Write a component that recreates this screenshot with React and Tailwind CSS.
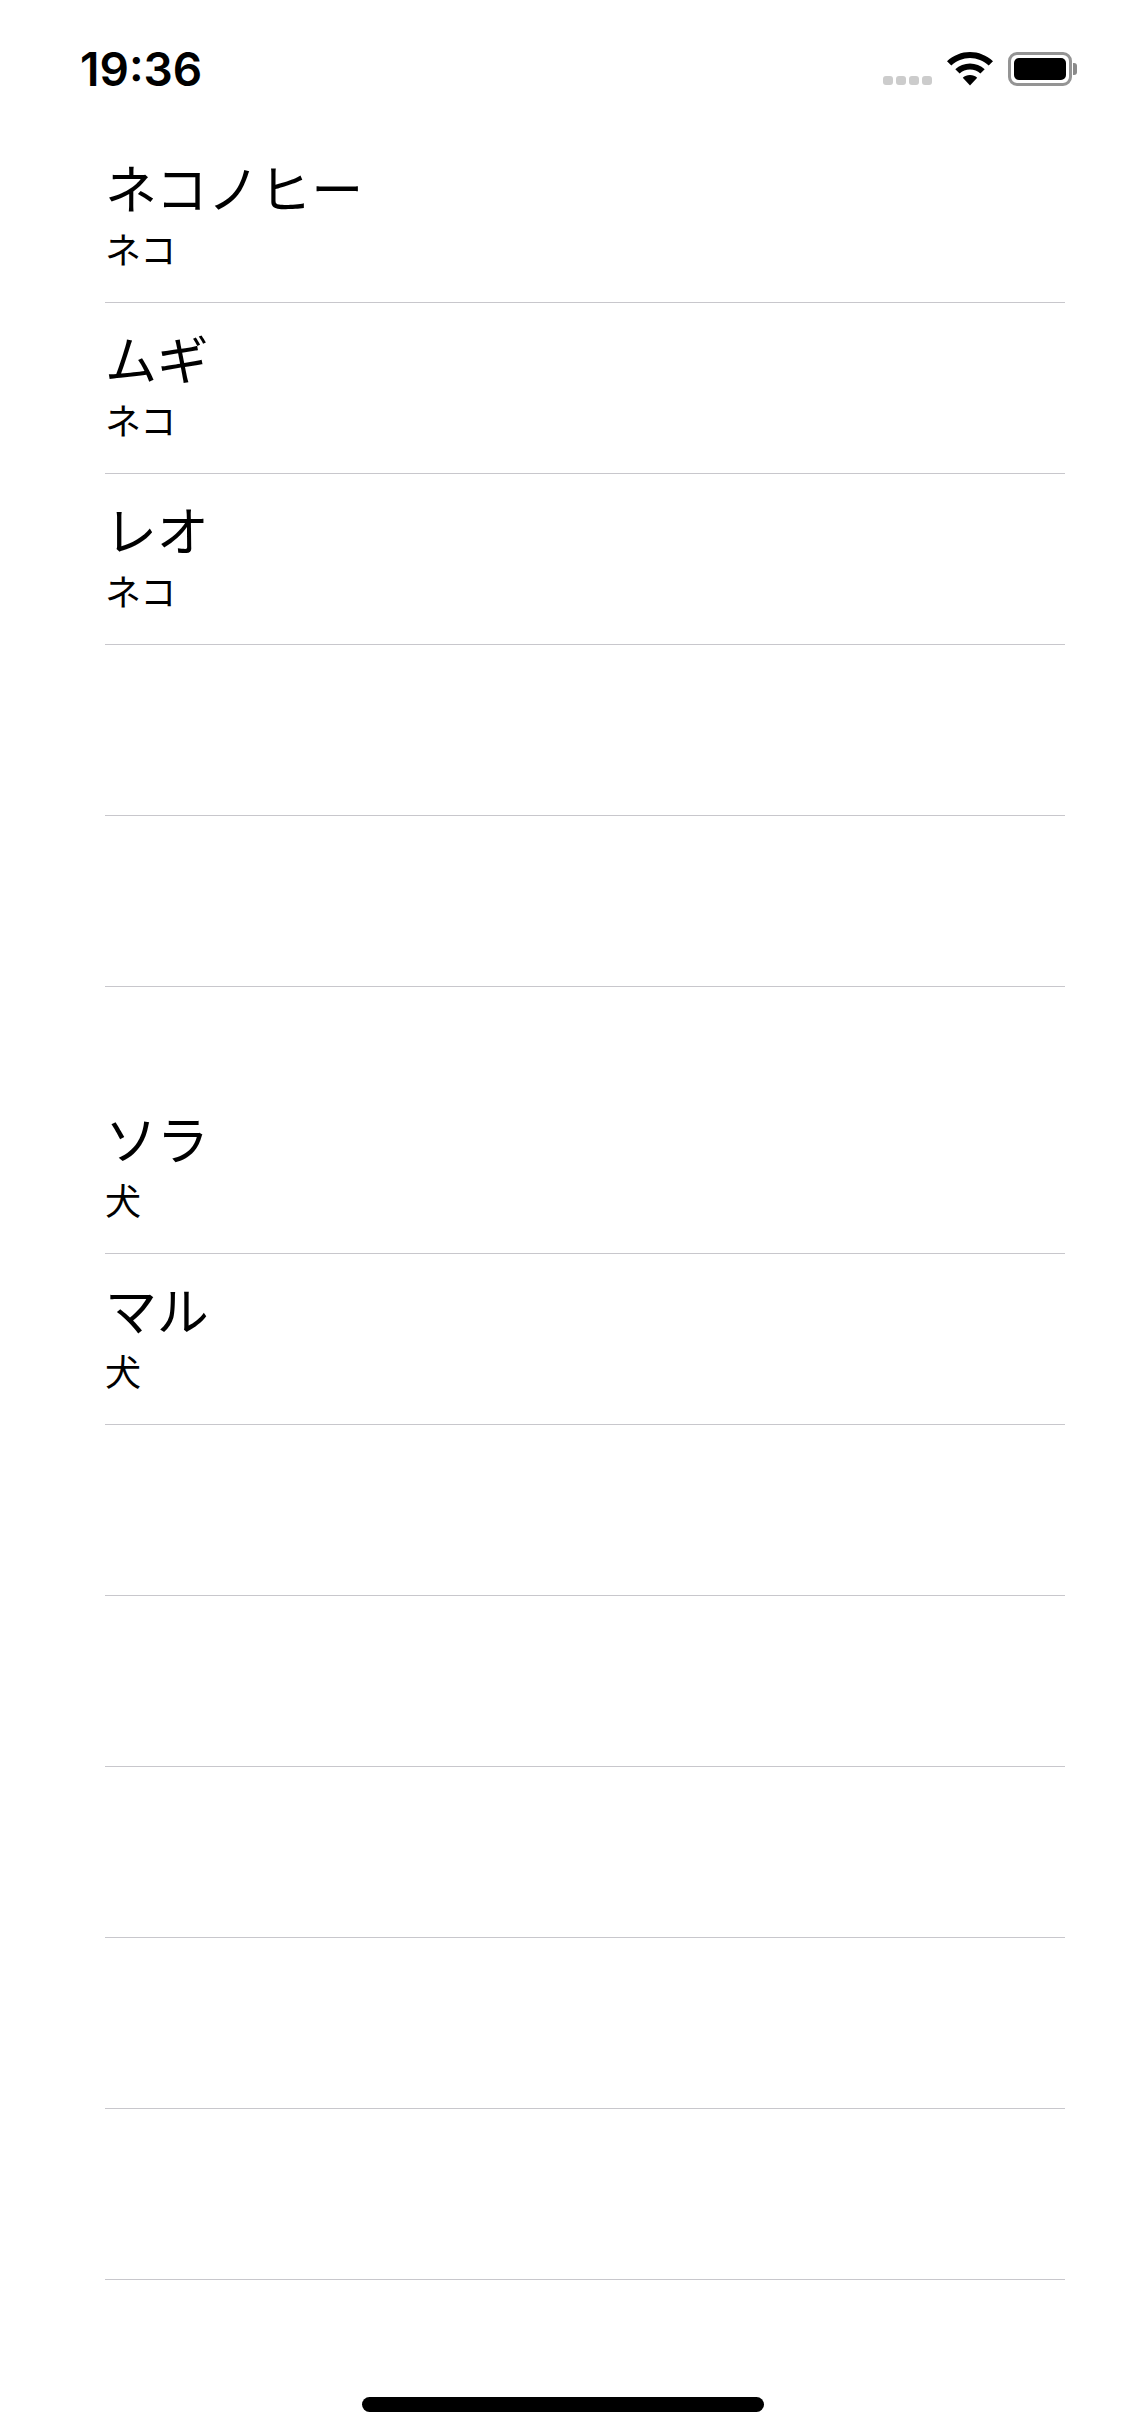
const jp = { fontFamily: '"Noto Sans CJK JP", sans-serif' };

function Row({ title, sub }) {
  return (
    <div className="h-[171px] border-b border-[#c8c7cc] box-border flex flex-col pt-[20px]" style={jp}>
      {title && (
        <>
          <div className="text-[52px] leading-[70px] font-normal text-black tracking-[-0.2px]">{title}</div>
          <div className="text-[36px] leading-[52px] font-normal text-black">{sub}</div>
        </>
      )}
    </div>
  );
}

export default function App() {
  return (
    <div className="w-[1125px] h-[2436px] bg-white overflow-hidden relative flex flex-col">
      <div className="h-[132px] pl-[80px] pr-[43px] flex items-start justify-between">
        <div className="mt-[44px] text-[46px] leading-[50px] font-semibold text-black" style={{ fontFamily: 'Inter, sans-serif' }}>19:36</div>
        <div className="mt-[52px] mr-[5px] flex items-start">
          <div className="flex gap-[3px] mt-[24px] mr-[15px]">
            <div className="w-[10px] h-[9px] rounded-[3px] bg-[#cccccc]" />
            <div className="w-[10px] h-[9px] rounded-[3px] bg-[#cccccc]" />
            <div className="w-[10px] h-[9px] rounded-[3px] bg-[#cccccc]" />
            <div className="w-[10px] h-[9px] rounded-[3px] bg-[#cccccc]" />
          </div>
          <svg width="46" height="34" viewBox="0 0 46 34" className="mr-[15px]">
            <path d="M23 0C14.500 0 6.500 3.300 0 9.200l4.300 4.300C9.700 8.800 16 6 23 6s13.300 2.800 18.700 7.500L46 9.200C39.500 3.300 31.500 0 23 0z" fill="#000" />
            <path d="M23 11.500c-5.600 0-10.700 2.100-14.700 5.700l4.300 4.300c2.800-2.500 6.400-4 10.400-4s7.600 1.500 10.400 4l4.300-4.300c-4-3.600-9.100-5.700-14.700-5.700z" fill="#000" />
            <path d="M23 23c-2.800 0-5.300 1-7.200 2.800L23 33.500l7.200-7.700C28.300 24 25.800 23 23 23z" fill="#000" />
          </svg>
          <div className="flex items-center">
            <div className="w-[64px] h-[34px] rounded-[9px] border-[3px] border-[#949494] p-[3px]">
              <div className="w-full h-full rounded-[5px] bg-black" />
            </div>
            <div className="w-[4px] h-[12px] rounded-r-[3px] bg-[#8a8a8a] ml-[1px]" />
          </div>
        </div>
      </div>
      <div className="pl-[105px] pr-[60px]">
        <Row title="ネコノヒー" sub="ネコ" />
        <Row title="ムギ" sub="ネコ" />
        <Row title="レオ" sub="ネコ" />
        <Row />
        <Row />
        <div className="h-[96px]" />
        <Row title="ソラ" sub="犬" />
        <Row title="マル" sub="犬" />
        <Row />
        <Row />
        <Row />
        <Row />
        <Row />
      </div>
      <div className="absolute left-[362px] top-[2397px] w-[402px] h-[15px] rounded-full bg-black" />
    </div>
  );
}
